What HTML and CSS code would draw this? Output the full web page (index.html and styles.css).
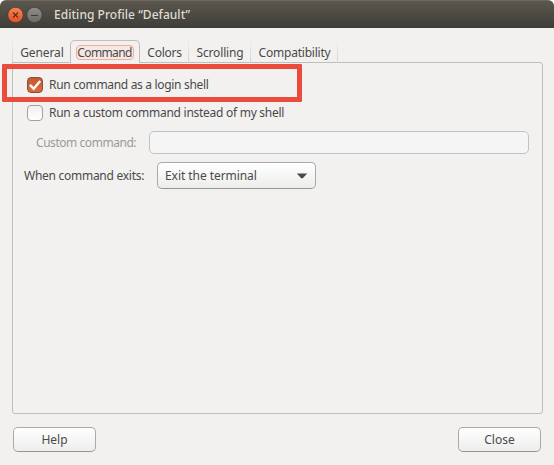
FILE: index.html
```html
<!DOCTYPE html>
<html lang="en">
<head>
<meta charset="utf-8">
<title>Editing Profile “Default”</title>
<link rel="stylesheet" href="styles.css">
</head>
<body>
<div class="window">
  <header class="titlebar">
    <svg class="wm" width="36" height="18" viewBox="0 0 36 18">
      <defs>
        <linearGradient id="o" x1="0" y1="0" x2="0" y2="1"><stop offset="0" stop-color="#f98457"/><stop offset="1" stop-color="#e5501f"/></linearGradient>
        <linearGradient id="g" x1="0" y1="0" x2="0" y2="1"><stop offset="0" stop-color="#8f8e88"/><stop offset="1" stop-color="#6b6a64"/></linearGradient>
      </defs>
      <circle cx="8.5" cy="9" r="7.7" fill="url(#o)" stroke="#34332e" stroke-width=".6"/>
      <path d="M6 6.5l5 5M11 6.5l-5 5" stroke="#55301f" stroke-width="1.2"/>
      <circle cx="27.5" cy="9" r="7.7" fill="url(#g)" stroke="#34332e" stroke-width=".6"/>
      <path d="M24 9.5h7" stroke="#3b3a35" stroke-width="1.1"/>
    </svg>
    <h1 class="title">Editing Profile “Default”</h1>
  </header>
  <main class="content">
    <nav class="tabs">
      <div class="tab general"><span>General</span></div>
      <div class="tab command active"><span>Command</span></div>
      <div class="tab colors"><span>Colors</span></div>
      <div class="tab scrolling"><span>Scrolling</span></div>
      <div class="tab compat"><span>Compatibility</span></div>
    </nav>
    <section class="panel">
      <label class="check-row"><span class="box checked"><svg width="16" height="16" viewBox="0 0 16 16"><path d="M2.9 7.8l3.8 4L13.2 4" fill="none" stroke="#fff" stroke-width="2.4"/></svg></span><span class="t-login">Run command as a login shell</span></label>
      <label class="check-row"><span class="box"></span><span class="t-custom">Run a custom command instead of my shell</span></label>
      <div class="entry-row"><span class="entry-label">Custom command:</span><div class="entry"></div></div>
      <div class="exit-row"><span class="exit-label">When command exits:</span>
        <div class="select"><span class="t-exit">Exit the terminal</span><svg width="12" height="8" viewBox="0 0 12 8"><path d="M.8 1.5h10.4L7 6.1q-1 .8-2 0z" fill="#4a4a4a"/></svg></div>
      </div>
    </section>
    <footer class="actions"><div class="button"><span>Help</span></div><div class="button"><span>Close</span></div></footer>
  </main>
  <div class="highlight"></div>
</div>
</body>
</html>
```
FILE: styles.css
```css
* { box-sizing: border-box; }
body { margin: 0; background: #fff; font: 12px/16px "Noto Sans", "Open Sans", sans-serif; color: #4a4a4a; }
.window { position: relative; width: 554px; height: 465px; background: #f2f1f0; border-radius: 6px 6px 0 0; overflow: hidden; white-space: nowrap; }
.titlebar { height: 28px; display: flex; align-items: center; padding-left: 7px; background: linear-gradient(#5b574e, #3e3d38); border-top: 1px solid #6b675e; }
.title { margin: 0 0 0 11px; font: 500 12px/16px "Noto Sans", sans-serif; letter-spacing: .04px; color: #dfdbd2; }
.content { padding: 12px 11px 0 12px; }
.tabs { display: flex; height: 23px; margin-bottom: -1px; position: relative; }
.tab { display: flex; justify-content: center; align-items: center; padding: 2px 0 0 1px; border-right: 1px solid; border-image: linear-gradient(#f2f1f0, #d0cfcd) 1; }
.general { width: 58px; border-left: 1px solid; border-right: 0; letter-spacing: -.1px; }
.command { width: 70px; letter-spacing: -.65px; }
.colors { width: 49px; letter-spacing: -.25px; }
.scrolling { width: 62px; letter-spacing: -.15px; }
.compat { width: 87px; letter-spacing: -.22px; }
.tab.active { border: 1px solid #bfbebc; border-bottom: 0; border-image: none; border-radius: 5px 5px 0 0; background: #f2f1f0; padding: 0; }
.active span { outline: 1px solid #f3ad98; border-radius: 3px; background: #f5e8e4; line-height: 13px; padding-right: 1px; }
.panel { height: 352px; border: 1px solid #bfbebc; border-radius: 0 3px 3px 3px; padding: 14px 13px 0 11px; }
.check-row { display: flex; align-items: center; height: 16px; margin: 0 0 12px 3px; gap: 6px; }
.box { width: 16px; height: 16px; border: 1px solid #a3a19e; border-radius: 4px; background: linear-gradient(#f0f0f0, #fff); }
.checked { background: linear-gradient(#c8582e, #dc6a40); border-color: #83503d; }
.box svg { display: block; margin: -1px; }
.t-login { letter-spacing: -.32px; }
.t-custom { letter-spacing: -.27px; }
.entry-row { display: flex; align-items: center; height: 23px; margin-top: -2px; padding-left: 12px; color: #9c9a97; }
.entry-label { width: 113px; letter-spacing: -.45px; }
.entry { flex: 1; height: 23px; border: 1px solid #c3c2c0; border-radius: 5px; background: #f5f5f5; }
.exit-row { display: flex; align-items: center; margin-top: 8px; }
.exit-label { width: 133px; letter-spacing: -.27px; }
.t-exit { letter-spacing: -.06px; }
.select, .button { border: 1px solid #aaa9a7; border-bottom-color: #969593; border-radius: 5px; background: linear-gradient(#fff, #ededec); display: flex; align-items: center; }
.select { width: 159px; height: 27px; padding: 0 7px; justify-content: space-between; }
.actions { display: flex; justify-content: space-between; padding: 13px 2px 0 1px; }
.button { width: 83px; height: 25px; justify-content: center; }
.highlight { position: absolute; left: 2px; top: 64px; width: 300px; height: 38px; border: 5px solid #e94b3c; border-radius: 1px; }
```
